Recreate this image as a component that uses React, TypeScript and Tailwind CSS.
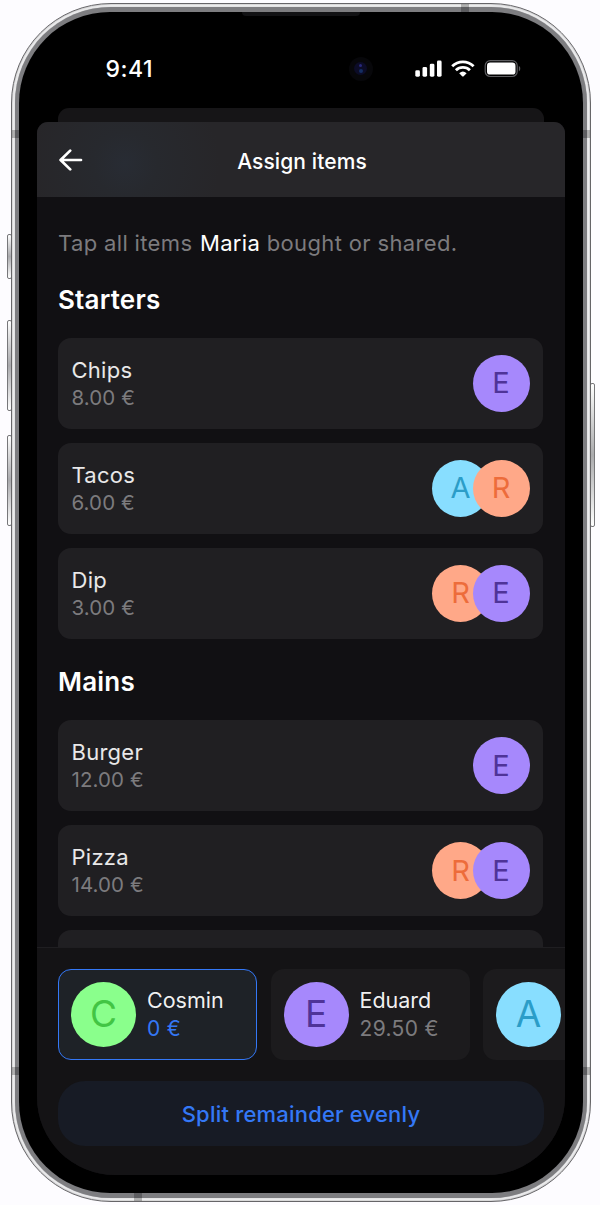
import React, { useState } from "react";

type Person = "A" | "C" | "E" | "R";

interface Item {
  name: string;
  price: string;
  people: Person[];
}

const avatarColors: Record<Person, string> = {
  A: "bg-[#88deff] text-[#2b9dc8]",
  C: "bg-[#8aff8c] text-[#42c544]",
  E: "bg-[#a688fc] text-[#4f3398]",
  R: "bg-[#ffa888] text-[#ed6c3b]",
};

const starters: Item[] = [
  { name: "Chips", price: "8.00 €", people: ["E"] },
  { name: "Tacos", price: "6.00 €", people: ["A", "R"] },
  { name: "Dip", price: "3.00 €", people: ["R", "E"] },
];

const mains: Item[] = [
  { name: "Burger", price: "12.00 €", people: ["E"] },
  { name: "Pizza", price: "14.00 €", people: ["R", "E"] },
  { name: "", price: "", people: [] },
];

const guests: { id: Person; name: string; total: string }[] = [
  { id: "C", name: "Cosmin", total: "0 €" },
  { id: "E", name: "Eduard", total: "29.50 €" },
  { id: "A", name: "", total: "" },
];

const StatusBar: React.FC = () => (
  <div className="flex h-[96.5px] shrink-0 items-start pl-[86px] pt-[41px] text-white">
    <span className="h-8 w-[243px] text-[23px] font-medium leading-[32px] tracking-[0.5px]">
      9:41
    </span>
    <span className="mt-[4px] mr-[42px] flex size-6 items-center justify-center rounded-full bg-[#07070a]">
      <span className="flex size-[13px] flex-col items-center justify-center gap-[2px] rounded-full bg-[#0c0c27]">
        <span className="size-[3px] rounded-full bg-[#28287a]" />
        <span className="size-[4px] rounded-full bg-[#142e62]" />
      </span>
    </span>
    <svg className="mt-[7px]" width="106" height="18" viewBox="0 0 106 18">
      <g fill="white">
        <rect x="0.3" y="10.3" width="4.6" height="6.4" rx="1.4" />
        <rect x="7.5" y="7" width="4.6" height="9.7" rx="1.4" />
        <rect x="14.8" y="3.7" width="4.6" height="13" rx="1.4" />
        <rect x="22" y="0.5" width="4.6" height="16.2" rx="1.4" />
      </g>
      <g fill="none" stroke="white" strokeWidth="2.9">
        <path d="M37.2 6.2a15.4 15.4 0 0 1 21.4 0" />
        <path d="M40.9 10.2a10.1 10.1 0 0 1 14 0" />
      </g>
      <path d="M44.2 13.2a5.6 5.6 0 0 1 7.4 0l-3.2 3.2a.8.8 0 0 1-1 0z" fill="white" />
      <rect x="70.2" y="0.7" width="32" height="15.8" rx="5" fill="none" stroke="#5d5d60" strokeWidth="1.2" />
      <rect x="72" y="2.6" width="28.5" height="12" rx="3.2" fill="white" />
      <path d="M103.9 6v5.2c1.8-.8 1.8-4.4 0-5.2z" fill="#5d5d60" />
    </svg>
  </div>
);

const Header: React.FC = () => (
  <header className="flex h-[75px] shrink-0 items-center bg-[#272629] bg-[radial-gradient(circle_at_88px_42px,#282c34_0px,#27292e_32px,transparent_95px)] pl-[22px]">
    <button className="w-6 pt-px">
      <svg width="24" height="22" viewBox="0 0 24 22" fill="none" stroke="white" strokeWidth="2.7" strokeLinecap="round" strokeLinejoin="round">
        <path d="M22 11H2M11.2 1.6 1.6 11l9.6 9.4" />
      </svg>
    </button>
    <h1 className="mt-[6px] flex-1 pr-[43px] text-center text-[21px] font-medium tracking-[0.1px] text-white">
      Assign items
    </h1>
  </header>
);

const ItemCard: React.FC<{ item: Item }> = ({ item }) => (
  <div className="flex h-[91px] shrink-0 items-center justify-between rounded-[13px] bg-[#201f22] px-[13.5px]">
    <div>
      <p className="text-[22px] leading-[28px] tracking-[0.25px] text-white/90">{item.name}</p>
      <p className="text-[20.5px] leading-[27px] tracking-[0.1px] text-[#7c7b7e]">{item.price}</p>
    </div>
    <div className="flex">
      {item.people.map((person) => (
        <span
          key={person}
          className={`flex size-[57px] items-center justify-center rounded-full text-[29px] not-first:-ml-[16.5px] ${avatarColors[person]}`}
        >
          {person}
        </span>
      ))}
    </div>
  </div>
);

const Section: React.FC<{ title: string; items: Item[] }> = ({ title, items }) => (
  <section className="shrink-0">
    <h2 className="mb-[20px] h-9 text-[26px] font-semibold leading-[36px] tracking-[0.2px] text-white">
      {title}
    </h2>
    <div className="flex flex-col gap-[14px]">
      {items.map((item) => (
        <ItemCard key={item.name} item={item} />
      ))}
    </div>
  </section>
);

const Footer: React.FC = () => {
  const [selected, setSelected] = useState<Person>("C");

  return (
    <footer className="h-[228px] shrink-0 border-t border-[#1f1e21] bg-[#141315] pl-[21.5px] pt-[20.5px]">
      <div className="flex gap-[13.5px] overflow-hidden">
        {guests.map((guest) => (
          <button
            key={guest.id}
            onClick={() => setSelected(guest.id)}
            className={`flex h-[91px] w-[199px] shrink-0 items-center gap-[11px] rounded-[13px] border pl-[12px] text-left ${
              selected === guest.id ? "border-[#3478f6] bg-[#1e2227]" : "border-transparent bg-[#1c1b1d]"
            }`}
          >
            <span className={`flex size-[65px] shrink-0 items-center justify-center rounded-full text-[37px] ${avatarColors[guest.id]}`}>
              {guest.id}
            </span>
            <span>
              <span className="block text-[21.5px] leading-[28px] text-white/95">{guest.name}</span>
              <span
                className={`block text-[21px] leading-[29px] tracking-[0.35px] ${
                  selected === guest.id ? "text-[#3478f6]" : "text-[#7c7b7e]"
                }`}
              >
                {guest.total}
              </span>
            </span>
          </button>
        ))}
      </div>
      <button className="mt-[21.5px] h-[65px] w-[486px] rounded-[27px] bg-[#171b25] pt-px text-[22px] font-medium tracking-[0.2px] text-[#3478f6]">
        Split remainder evenly
      </button>
    </footer>
  );
};

const SideButton: React.FC<{ className: string }> = ({ className }) => (
  <span
    className={`absolute w-[5px] rounded-[2px] border border-[#77777a] bg-linear-to-b from-white via-[#aaaaad] to-white ${className}`}
  />
);

const App: React.FC = () => {
  return (
    <div className="h-[1205px] w-[600px] overflow-hidden bg-[#fdfcff] pl-[10.5px] pt-[3px] font-['Inter',sans-serif]">
      <div className="relative h-[1198.5px] w-[580.5px]">
        <SideButton className="-left-[4px] top-[231px] h-[45px]" />
        <SideButton className="-left-[4px] top-[317px] h-[91px]" />
        <SideButton className="-left-[4px] top-[432px] h-[91px]" />
        <SideButton className="-right-[4px] top-[380px] h-[144px]" />

        <div className="relative h-full rounded-[100px] border border-[#666568] bg-[#f4f4f5] p-[3px] shadow-[inset_0_0_2px_#8c8c8f]">
          <div className="h-full rounded-[96px] bg-[#7d7d80] p-[4.5px] shadow-[0_0_1.5px_#a0a0a3]">
            <div className="flex h-full flex-col rounded-[91px] bg-black pb-[18px] pl-[17.5px] pr-[18px]">
              <div className="mx-auto -mb-1 h-1 w-[118px] shrink-0 rounded-b-[4px] bg-[#121214]" />
              <div className="-mx-[17px]">
                <StatusBar />
              </div>
              <div className="mx-[21px] h-[13.5px] shrink-0 rounded-t-[11px] bg-[#161517]" />
              <div className="flex min-h-0 flex-1 flex-col overflow-hidden rounded-b-[78px] rounded-t-[11px] bg-[#111013]">
                <Header />
                <main className="flex min-h-0 flex-1 flex-col overflow-hidden px-[21.5px] pt-[30px]">
                  <p className="h-8 shrink-0 whitespace-nowrap text-[22px] leading-[32px] tracking-[0.35px] text-[#7c7b7e]">
                    Tap all items <span className="ml-px text-white">Maria</span> bought or shared.
                  </p>
                  <div className="mt-[23px] flex flex-col gap-[25.5px]">
                    <Section title="Starters" items={starters} />
                    <Section title="Mains" items={mains} />
                  </div>
                </main>
                <Footer />
              </div>
            </div>
          </div>
          {/* antenna bands */}
          <span className="absolute left-0 top-[126px] h-[8px] w-[8px] bg-black/25" />
          <span className="absolute right-0 top-[126px] h-[8px] w-[8px] bg-black/25" />
          <span className="absolute left-0 top-[1063px] h-[8px] w-[8px] bg-black/25" />
          <span className="absolute right-0 top-[1063px] h-[8px] w-[8px] bg-black/25" />
          <span className="absolute left-[449px] top-0 h-[8px] w-[8px] bg-black/25" />
          <span className="absolute bottom-0 left-[122px] h-[8px] w-[8px] bg-black/25" />
        </div>
      </div>
    </div>
  );
};

export default App;
